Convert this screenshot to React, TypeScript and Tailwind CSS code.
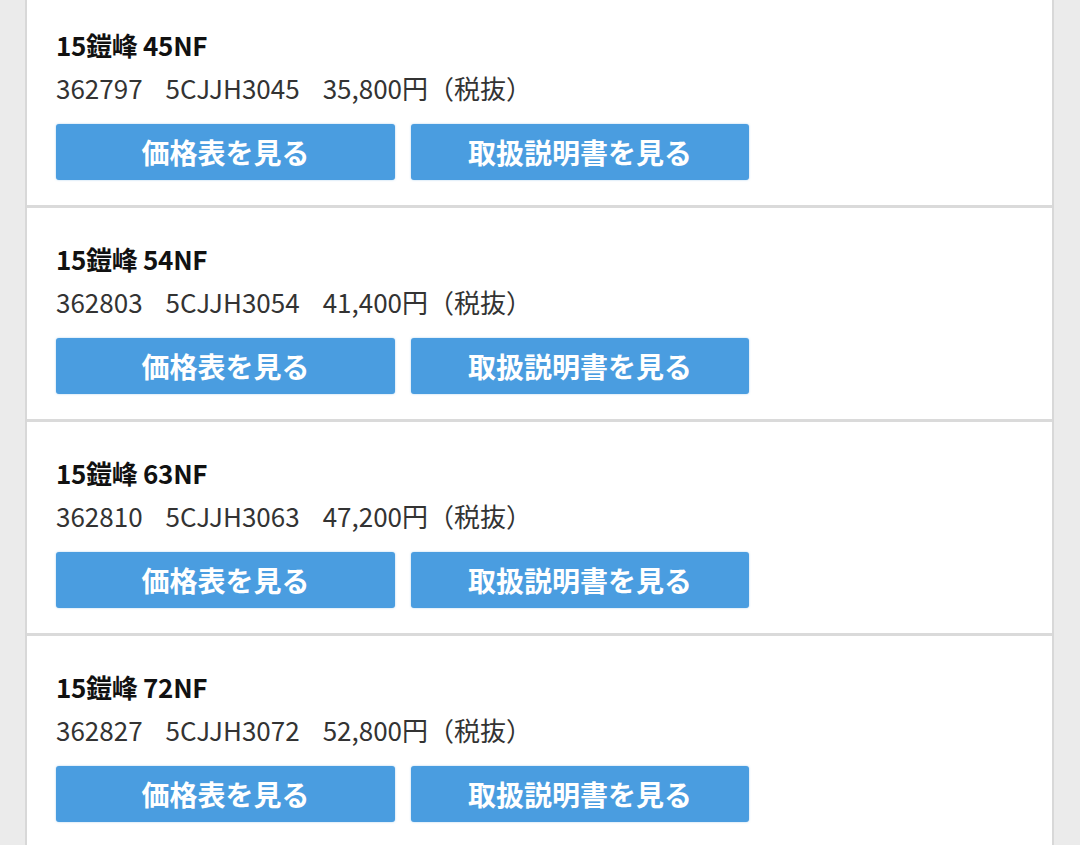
const items = [
  { name: '15鎧峰 45NF', code: '362797', model: '5CJJH3045', price: '35,800' },
  { name: '15鎧峰 54NF', code: '362803', model: '5CJJH3054', price: '41,400' },
  { name: '15鎧峰 63NF', code: '362810', model: '5CJJH3063', price: '47,200' },
  { name: '15鎧峰 72NF', code: '362827', model: '5CJJH3072', price: '52,800' },
]

function ItemRow({ item }: { item: (typeof items)[number] }) {
  return (
    <div className="border-b-[3px] border-[#dadada] pl-[29px] pt-[35px] pb-[25px]">
      <p className="text-[26px] leading-[32px] font-bold text-[#111] tracking-[-0.3px]">{item.name}</p>
      <p className="mt-[11px] text-[26px] leading-[32px] text-[#333] whitespace-pre">
        <span>{item.code}</span>
        <span className="ml-[23px]">{item.model}</span>
        <span className="ml-[23px]">{item.price}円（税抜）</span>
      </p>
      <div className="mt-[20px] flex gap-[16px]">
        <button className="w-[339px] h-[56px] rounded-[3px] bg-[#4a9de0] text-white text-[28px] font-bold shadow-[0_0_2px_rgba(74,157,224,0.5)]">
          価格表を見る
        </button>
        <button className="w-[338px] h-[56px] rounded-[3px] bg-[#4a9de0] text-white text-[28px] font-bold shadow-[0_0_2px_rgba(74,157,224,0.5)]">
          取扱説明書を見る
        </button>
      </div>
    </div>
  )
}

export default function App() {
  return (
    <div
      className="h-[845px] overflow-hidden bg-[#ebebeb] pl-[25px]"
      style={{ fontFamily: '"Noto Sans CJK JP", "Noto Sans", sans-serif' }}
    >
      <div className="w-[1029px] -mt-[6px] bg-white border-x-2 border-[#d8d8d8]">
        {items.map((item) => (
          <ItemRow key={item.code} item={item} />
        ))}
      </div>
    </div>
  )
}
